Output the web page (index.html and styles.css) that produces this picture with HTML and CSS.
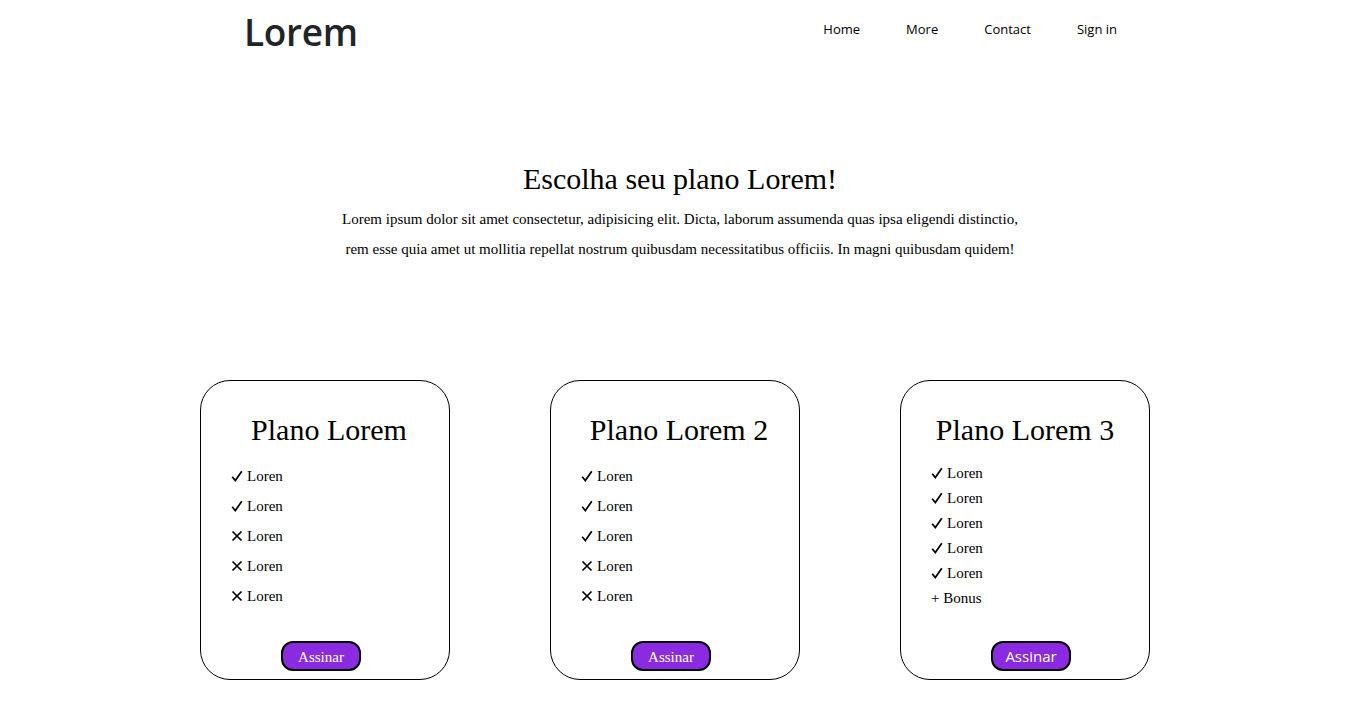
FILE: index.html
```html
<!DOCTYPE html>
<html lang="pt">
<head>
<meta charset="utf-8">
<title>Lorem</title>
<link rel="stylesheet" href="styles.css">
</head>
<body>
<header class="topbar">
  <div class="brand">Lorem</div>
  <nav class="nav">
    <a href="#">Home</a>
    <a href="#">More</a>
    <a href="#">Contact</a>
    <a href="#">Sign in</a>
  </nav>
</header>
<section class="intro">
  <h1>Escolha seu plano Lorem!</h1>
  <p>Lorem ipsum dolor sit amet consectetur, adipisicing elit. Dicta, laborum assumenda quas ipsa eligendi distinctio, rem esse quia amet ut mollitia repellat nostrum quibusdam necessitatibus officiis. In magni quibusdam quidem!</p>
</section>
<main class="plans">
  <div class="card">
    <h2 class="shift">Plano Lorem</h2>
    <ul class="feat">
      <li><svg class="ic" viewBox="0 0 12 12"><path d="M1.2 6.8 L4.3 10.6 L10.8 1.2"/></svg>Loren</li>
      <li><svg class="ic" viewBox="0 0 12 12"><path d="M1.2 6.8 L4.3 10.6 L10.8 1.2"/></svg>Loren</li>
      <li><svg class="ic" viewBox="0 0 12 12"><path d="M1.5 1.5 L10.5 10.5 M10.5 1.5 L1.5 10.5"/></svg>Loren</li>
      <li><svg class="ic" viewBox="0 0 12 12"><path d="M1.5 1.5 L10.5 10.5 M10.5 1.5 L1.5 10.5"/></svg>Loren</li>
      <li><svg class="ic" viewBox="0 0 12 12"><path d="M1.5 1.5 L10.5 10.5 M10.5 1.5 L1.5 10.5"/></svg>Loren</li>
    </ul>
    <button class="btn">Assinar</button>
  </div>
  <div class="card">
    <h2 class="shift">Plano Lorem 2</h2>
    <ul class="feat">
      <li><svg class="ic" viewBox="0 0 12 12"><path d="M1.2 6.8 L4.3 10.6 L10.8 1.2"/></svg>Loren</li>
      <li><svg class="ic" viewBox="0 0 12 12"><path d="M1.2 6.8 L4.3 10.6 L10.8 1.2"/></svg>Loren</li>
      <li><svg class="ic" viewBox="0 0 12 12"><path d="M1.2 6.8 L4.3 10.6 L10.8 1.2"/></svg>Loren</li>
      <li><svg class="ic" viewBox="0 0 12 12"><path d="M1.5 1.5 L10.5 10.5 M10.5 1.5 L1.5 10.5"/></svg>Loren</li>
      <li><svg class="ic" viewBox="0 0 12 12"><path d="M1.5 1.5 L10.5 10.5 M10.5 1.5 L1.5 10.5"/></svg>Loren</li>
    </ul>
    <button class="btn">Assinar</button>
  </div>
  <div class="card">
    <h2>Plano Lorem 3</h2>
    <ul class="feat tight">
      <li><svg class="ic" viewBox="0 0 12 12"><path d="M1.2 6.8 L4.3 10.6 L10.8 1.2"/></svg>Loren</li>
      <li><svg class="ic" viewBox="0 0 12 12"><path d="M1.2 6.8 L4.3 10.6 L10.8 1.2"/></svg>Loren</li>
      <li><svg class="ic" viewBox="0 0 12 12"><path d="M1.2 6.8 L4.3 10.6 L10.8 1.2"/></svg>Loren</li>
      <li><svg class="ic" viewBox="0 0 12 12"><path d="M1.2 6.8 L4.3 10.6 L10.8 1.2"/></svg>Loren</li>
      <li><svg class="ic" viewBox="0 0 12 12"><path d="M1.2 6.8 L4.3 10.6 L10.8 1.2"/></svg>Loren</li>
      <li>+ Bonus</li>
    </ul>
    <button class="btn btn-sans">Assinar</button>
  </div>
</main>
</body>
</html>
```
FILE: styles.css
```css
* { box-sizing: border-box; }
body {
  margin: 0;
  font-family: "Liberation Serif", "Times New Roman", serif;
  color: #000;
  background: #fff;
}
.topbar {
  display: flex;
  align-items: flex-start;
  justify-content: space-between;
  padding: 7px 243px 0 244px;
  height: 62px;
}
.brand {
  font-family: "Open Sans", "Noto Sans", sans-serif;
  font-weight: 600;
  font-size: 37px;
  color: #212529;
  line-height: 50px;
  letter-spacing: -0.3px;
}
.nav {
  display: flex;
  gap: 46px;
  padding-top: 12px;
}
.nav a {
  font-family: "Open Sans", "Noto Sans", sans-serif;
  font-size: 13px;
  color: #000;
  text-decoration: none;
  line-height: 20px;
}
.intro {
  text-align: center;
  padding-top: 97px;
}
.intro h1 {
  font-size: 30px;
  font-weight: normal;
  margin: 0;
  line-height: 40px;
}
.intro p {
  font-size: 15px;
  line-height: 30px;
  max-width: 690px;
  margin: 5px auto 0;
}
.plans {
  display: flex;
  gap: 100px;
  padding-left: 200px;
  margin-top: 116px;
}
.card {
  width: 250px;
  height: 300px;
  border: 1px solid #000;
  border-radius: 30px;
  display: flex;
  flex-direction: column;
  padding: 31px 30px 8px;
}
.card h2 {
  font-size: 30px;
  font-weight: normal;
  text-align: center;
  margin: 0;
  line-height: 36px;
}
.card h2.shift { padding-left: 8px; }
.feat {
  list-style: none;
  margin: 13px 0 0;
  padding: 0;
  font-size: 15px;
  flex: 1;
}
.feat li {
  line-height: 30px;
  height: 30px;
}
.feat.tight { margin-top: 13px; }
.feat.tight li { line-height: 25px; height: 25px; }
.ic {
  width: 12px;
  height: 12px;
  margin-right: 4px;
  vertical-align: -1px;
  fill: none;
  stroke: #000;
  stroke-width: 1.7;
}
.btn {
  align-self: center;
  width: 80px;
  height: 30px;
  background: #8a2be2;
  color: #fff;
  border: 2px solid #000;
  border-radius: 12px;
  font-family: "Liberation Serif", "Times New Roman", serif;
  font-size: 15px;
  padding: 2px 0 0;
  margin-right: 8px;
}
.btn-sans {
  font-family: "Open Sans", "Noto Sans", sans-serif;
  font-size: 15px;
  padding: 0;
  margin-right: 0;
  margin-left: 12px;
}
```
